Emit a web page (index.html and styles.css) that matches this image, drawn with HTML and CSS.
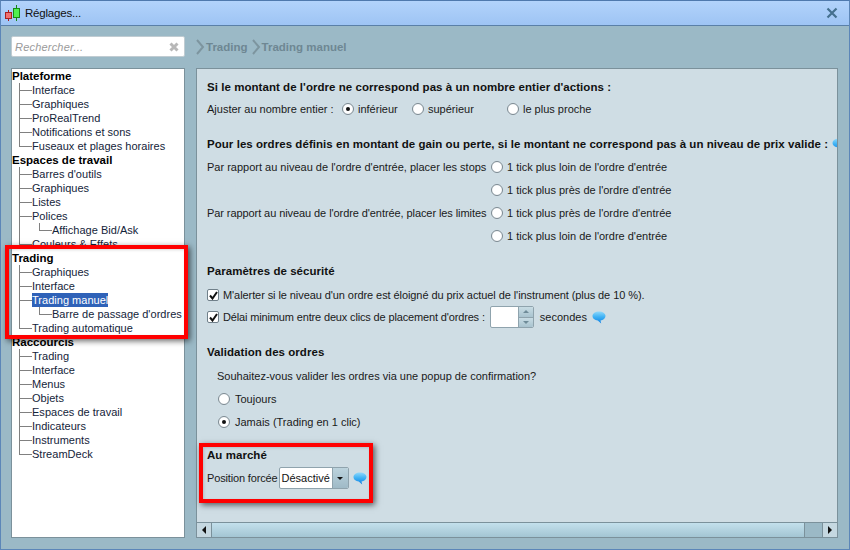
FILE: index.html
```html
<!DOCTYPE html>
<html lang="fr">
<head>
    <meta charset="UTF-8">
    <title>Réglages...</title>
    <link rel="stylesheet" href="styles.css">
</head>
<body>
    <div class="window">
        <div class="titlebar">
            <svg class="app-icon" width="17" height="17" viewBox="0 0 17 17">
                <path d="M4.500 5v11" stroke="#b01818"/>
                <rect x="1.500" y="7.500" width="6" height="6" fill="#f07070" stroke="#a82020"/>
                <path d="M12.500 0v16" stroke="#168a16"/>
                <rect x="9.500" y="3.500" width="6" height="9" fill="#50f050" stroke="#188a18"/>
            </svg>
            <span class="title-text">Réglages...</span>
            <svg class="close-icon" width="12" height="12" viewBox="0 0 12 12">
                <path d="M1.500 1.500l9 9M10.500 1.500l-9 9" stroke="#45708f" stroke-width="2.200"/>
            </svg>
        </div>

        <div class="content">
            <div class="side">
                <div class="search">
                    <span class="search-hint">Rechercher...</span>
                    <svg width="10" height="10" viewBox="0 0 10 10">
                        <path d="M1.500 1.500l7 7M8.500 1.500l-7 7" stroke="#b8b8b8" stroke-width="3"/>
                    </svg>
                </div>
                <div class="tree">
                    <div class="tree-title">Plateforme</div>
                    <ul>
                        <li>Interface</li>
                        <li>Graphiques</li>
                        <li>ProRealTrend</li>
                        <li>Notifications et sons</li>
                        <li>Fuseaux et plages horaires</li>
                    </ul>
                    <div class="tree-title">Espaces de travail</div>
                    <ul>
                        <li>Barres d'outils</li>
                        <li>Graphiques</li>
                        <li>Listes</li>
                        <li>Polices
                            <ul>
                                <li>Affichage Bid/Ask</li>
                            </ul>
                        </li>
                        <li>Couleurs &amp; Effets</li>
                    </ul>
                    <div class="tree-title">Trading</div>
                    <ul>
                        <li>Graphiques</li>
                        <li>Interface</li>
                        <li><span class="selected">Trading manuel</span>
                            <ul>
                                <li>Barre de passage d'ordres</li>
                            </ul>
                        </li>
                        <li>Trading automatique</li>
                    </ul>
                    <div class="tree-title">Raccourcis</div>
                    <ul>
                        <li>Trading</li>
                        <li>Interface</li>
                        <li>Menus</li>
                        <li>Objets</li>
                        <li>Espaces de travail</li>
                        <li>Indicateurs</li>
                        <li>Instruments</li>
                        <li>StreamDeck</li>
                    </ul>
                </div>
            </div>

            <div class="main">
                <div class="crumbs">
                    <svg width="9" height="16" viewBox="0 0 9 16"><path d="M1 1l6 7-6 7" fill="none" stroke="#7d959f" stroke-width="2"/></svg>
                    <span class="crumb">Trading</span>
                    <svg width="9" height="16" viewBox="0 0 9 16"><path d="M1 1l6 7-6 7" fill="none" stroke="#7d959f" stroke-width="2"/></svg>
                    <span>Trading manuel</span>
                </div>
                <div class="panel">
                    <div class="panel-body">
                        <h2 class="first">Si le montant de l'ordre ne correspond pas à un nombre entier d'actions :</h2>
                        <div class="row adjust">
                            <span class="adjust-label">Ajuster au nombre entier :</span>
                            <span class="radio on"></span><span class="adjust-a">inférieur</span>
                            <span class="radio"></span><span class="adjust-b">supérieur</span>
                            <span class="radio"></span><span>le plus proche</span>
                        </div>

                        <h2 class="prices">Pour les ordres définis en montant de gain ou perte, si le montant ne correspond pas à un niveau de prix valide :
                            <svg class="bubble" width="14" height="13" viewBox="0 0 14 13"><path d="M7 .5c3.600 0 6.500 1.900 6.500 4.500 0 2.300-2.200 4.100-5 4.400l.7 3.100-3.500-3.100C2.800 9.300.5 7.400.5 5 .5 2.400 3.400.5 7 .5z" fill="url(#bubble-fill)"/></svg>
                        </h2>
                        <div class="tick-grid">
                            <span>Par rapport au niveau de l'ordre d'entrée, placer les stops</span>
                            <span class="radio"></span><span>1 tick plus loin de l'ordre d'entrée</span>
                            <span></span>
                            <span class="radio"></span><span>1 tick plus près de l'ordre d'entrée</span>
                            <span class="tight">Par rapport au niveau de l'ordre d'entrée, placer les limites</span>
                            <span class="radio"></span><span>1 tick plus près de l'ordre d'entrée</span>
                            <span></span>
                            <span class="radio"></span><span>1 tick plus loin de l'ordre d'entrée</span>
                        </div>

                        <h2 class="security">Paramètres de sécurité</h2>
                        <div class="row check-row">
                            <span class="check">
                                <svg width="9" height="9" viewBox="0 0 9 9"><path d="M1 4.500l2.500 3L8 1" fill="none" stroke="#111" stroke-width="2"/></svg>
                            </span>
                            <span class="tight">M'alerter si le niveau d'un ordre est éloigné du prix actuel de l'instrument (plus de 10 %).</span>
                        </div>
                        <div class="row check-row delay">
                            <span class="check">
                                <svg width="9" height="9" viewBox="0 0 9 9"><path d="M1 4.500l2.500 3L8 1" fill="none" stroke="#111" stroke-width="2"/></svg>
                            </span>
                            <span class="tighter">Délai minimum entre deux clics de placement d'ordres :</span>
                            <span class="spinner">
                                <span class="spinner-input"></span>
                                <span class="spinner-btns">
                                    <span class="spin-up"></span>
                                    <span class="spin-down"></span>
                                </span>
                            </span>
                            <span>secondes</span>
                            <svg class="bubble" width="14" height="13" viewBox="0 0 14 13"><path d="M7 .5c3.600 0 6.500 1.900 6.500 4.500 0 2.300-2.200 4.100-5 4.400l.7 3.100-3.500-3.100C2.800 9.300.5 7.400.5 5 .5 2.400 3.400.5 7 .5z" fill="url(#bubble-fill)"/></svg>
                        </div>

                        <h2 class="validation">Validation des ordres</h2>
                        <div class="indent question">Souhaitez-vous valider les ordres via une popup de confirmation?</div>
                        <div class="row indent-radio">
                            <span class="radio"></span><span>Toujours</span>
                        </div>
                        <div class="row indent-radio">
                            <span class="radio on"></span><span>Jamais (Trading en 1 clic)</span>
                        </div>

                        <h2 class="market">Au marché</h2>
                        <div class="row market-row">
                            <span class="tighter">Position forcée</span>
                            <span class="select">
                                <span class="select-value">Désactivé</span>
                                <span class="select-btn"></span>
                            </span>
                            <svg class="bubble" width="14" height="13" viewBox="0 0 14 13"><path d="M7 .5c3.600 0 6.500 1.900 6.500 4.500 0 2.300-2.200 4.100-5 4.400l.7 3.100-3.500-3.100C2.800 9.300.5 7.400.5 5 .5 2.400 3.400.5 7 .5z" fill="url(#bubble-fill)"/></svg>
                        </div>
                    </div>
                    <div class="hscroll">
                        <span class="scroll-btn"><span class="arrow-left"></span></span>
                        <span class="scroll-thumb"></span>
                        <span class="scroll-track"></span>
                        <span class="scroll-btn"><span class="arrow-right"></span></span>
                    </div>
                </div>
            </div>
        </div>

        <div class="callout callout-tree"></div>
        <div class="callout callout-market"></div>
    </div>

    <svg width="0" height="0" class="defs">
        <defs>
            <linearGradient id="bubble-fill" x1="0" y1="0" x2="0" y2="1">
                <stop offset="0" stop-color="#8fd8fb"/>
                <stop offset="0.45" stop-color="#3fb2f4"/>
                <stop offset="1" stop-color="#0f7fe4"/>
            </linearGradient>
        </defs>
    </svg>
</body>
</html>
```

FILE: styles.css
```css
* {
    box-sizing: border-box;
}

html, body {
    margin: 0;
    height: 100%;
}

body {
    font-family: "Liberation Sans", Arial, sans-serif;
    font-size: 11px;
    color: #1a1a1a;
    overflow: hidden;
}

.defs {
    position: absolute;
}

.tight {
    letter-spacing: -0.08px;
}

.tighter {
    letter-spacing: -0.15px;
}

.window {
    position: relative;
    width: 850px;
    height: 550px;
    display: flex;
    flex-direction: column;
    background: #9bb9c6;
    border: 1px solid #5c86b8;
    border-top-color: #4f79ad;
}

.titlebar {
    height: 25px;
    flex: none;
    display: flex;
    align-items: center;
    padding: 0 11px 0 3px;
    background: linear-gradient(#b2d3fb, #9ec4f4);
    border-bottom: 1px solid #5a80a8;
}

.app-icon {
    margin-right: 4px;
}

.title-text {
    font-size: 11.500px;
    letter-spacing: -0.2px;
    flex: 1;
    color: #111;
}

.content {
    flex: 1;
    min-height: 0;
    display: flex;
    padding: 10px 11px 11px 10px;
    gap: 11px;
}

/* left column */
.side {
    width: 174px;
    flex: none;
    display: flex;
    flex-direction: column;
    gap: 11px;
}

.search {
    height: 21px;
    flex: none;
    display: flex;
    align-items: center;
    justify-content: space-between;
    padding: 0 5px 0 3px;
    background: #fff;
    border: 1px solid #c0ccd2;
    border-radius: 2px;
}

.search-hint {
    font-style: italic;
    color: #9a9a9a;
    letter-spacing: 0.2px;
}

.tree {
    flex: 1;
    min-height: 0;
    background: #fff;
    border: 1px solid #7b919b;
    overflow: hidden;
    line-height: 14px;
}

.tree-title {
    height: 14px;
    font-weight: bold;
    color: #000;
    font-size: 11.500px;
}

.tree ul {
    list-style: none;
    margin: 0;
    padding: 0 0 0 20px;
    color: #14243a;
}

.tree li {
    position: relative;
    min-height: 14px;
    white-space: nowrap;
    letter-spacing: 0.02px;
}

/* connector lines */
.tree li::before {
    content: "";
    position: absolute;
    left: -13px;
    top: 0;
    width: 12px;
    height: 7px;
    border-left: 1px solid #808080;
    border-bottom: 1px solid #808080;
}

.tree li:not(:last-child)::after {
    content: "";
    position: absolute;
    left: -13px;
    top: 0;
    bottom: 0;
    border-left: 1px solid #808080;
}

.selected {
    background: #2f62b8;
    color: #fff;
    display: inline-block;
    height: 14px;
}

/* right column */
.main {
    flex: 1;
    min-width: 0;
    display: flex;
    flex-direction: column;
    gap: 11px;
}

.crumbs {
    height: 21px;
    flex: none;
    display: flex;
    align-items: center;
    gap: 1px;
    font-size: 11.500px;
    font-weight: bold;
    color: #6e8793;
}

.crumb {
    margin-right: 3px;
}

.panel {
    flex: 1;
    min-height: 0;
    display: flex;
    flex-direction: column;
    background: #cfdde4;
    border: 1px solid #7b919b;
    overflow: hidden;
}

.panel-body {
    flex: 1;
    min-height: 0;
    padding: 11px 0 0 10px;
    white-space: nowrap;
    overflow: hidden;
}

h2 {
    margin: 0;
    font-size: 11.500px;
    line-height: 14px;
    font-weight: bold;
    letter-spacing: 0.05px;
    color: #111;
    display: flex;
    align-items: center;
    gap: 4px;
}

.row {
    display: flex;
    align-items: center;
    height: 14px;
}

.radio {
    display: inline-block;
    width: 12px;
    height: 12px;
    flex: none;
    border-radius: 50%;
    background: radial-gradient(#fff 55%, #e2e8ec);
    border: 1px solid #7d8a92;
    position: relative;
}

.radio.on::after {
    content: "";
    position: absolute;
    left: 3px;
    top: 3px;
    width: 4px;
    height: 4px;
    border-radius: 50%;
    background: #111;
}

.adjust {
    margin-top: 8px;
}

.adjust-label {
    width: 135px;
}

.adjust .radio {
    margin-right: 4px;
}

.adjust-a {
    width: 54px;
}

.adjust-b {
    width: 79px;
}

.prices {
    margin-top: 21px;
    width: 700px;
}

.prices .bubble {
    margin-left: 0;
}

.tick-grid {
    margin-top: 9px;
    display: grid;
    grid-template-columns: 284px 16px auto;
    grid-auto-rows: 14px;
    row-gap: 9px;
    align-items: center;
}

.security {
    margin-top: 21px;
}

.check {
    width: 12px;
    height: 12px;
    flex: none;
    margin-right: 4px;
    display: inline-flex;
    align-items: center;
    justify-content: center;
    background: #fff;
    border: 1px solid #70808a;
    border-radius: 2px;
}

.check-row {
    margin-top: 10px;
}

.check-row.delay {
    margin-top: 8px;
}

.spinner {
    display: inline-flex;
    width: 44px;
    height: 22px;
    margin: 0 6px 0 5px;
    flex: none;
    background: #fff;
    border: 1px solid #8fa3ad;
    border-radius: 2px;
    overflow: hidden;
}

.spinner-input {
    flex: 1;
}

.spinner-btns {
    width: 15px;
    display: flex;
    flex-direction: column;
    border-left: 1px solid #8fa3ad;
}

.spin-up, .spin-down {
    flex: 1;
    display: flex;
    align-items: center;
    justify-content: center;
    background: linear-gradient(#c8dce4, #a9c3cf);
}

.spin-up {
    border-bottom: 1px solid #8fa3ad;
}

.spin-up::after {
    content: "";
    border: 3px solid transparent;
    border-top: 0;
    border-bottom: 3px solid #6f8b98;
}

.spin-down::after {
    content: "";
    border: 3px solid transparent;
    border-bottom: 0;
    border-top: 3px solid #6f8b98;
}

.bubble {
    margin-left: 5px;
    flex: none;
}

.validation {
    margin-top: 21px;
}

.question {
    margin-top: 10px;
    padding-left: 10px;
    line-height: 14px;
}

.indent-radio {
    margin-top: 9px;
    padding-left: 11px;
}

.indent-radio .radio {
    margin-right: 5px;
}

.market {
    margin-top: 19px;
}

.market-row {
    margin-top: 9px;
}

.market-row .bubble {
    margin-left: 4px;
}

.select {
    display: inline-flex;
    width: 70px;
    height: 22px;
    flex: none;
    background: #fff;
    border: 1px solid #8fa3ad;
    border-radius: 2px;
    margin-left: 1px;
    overflow: hidden;
}

.select-value {
    flex: 1;
    line-height: 20px;
    padding-left: 2px;
    color: #111;
}

.select-btn {
    width: 16px;
    display: flex;
    align-items: center;
    justify-content: center;
    background: linear-gradient(#bcd3dd, #9fbac7);
    border-left: 1px solid #8fa3ad;
}

.select-btn::after {
    content: "";
    border: 3.500px solid transparent;
    border-bottom: 0;
    border-top: 3.500px solid #111;
}

/* horizontal scrollbar */
.hscroll {
    height: 15px;
    flex: none;
    display: flex;
    border-top: 1px solid #7b919b;
}

.scroll-btn {
    width: 15px;
    flex: none;
    display: flex;
    align-items: center;
    justify-content: center;
    background: #c5d8e1;
}

.scroll-btn:first-child {
    border-right: 1px solid #7b919b;
}

.scroll-btn:last-child {
    border-left: 1px solid #7b919b;
}

.arrow-left {
    border: 4px solid transparent;
    border-left: 0;
    border-right: 4px solid #111;
}

.arrow-right {
    border: 4px solid transparent;
    border-right: 0;
    border-left: 4px solid #111;
}

.scroll-thumb {
    flex: 1;
    background: linear-gradient(#c3e0ec, #a3c5d3);
    border-right: 1px solid #7b919b;
}

.scroll-track {
    width: 17px;
    flex: none;
    background: #9bb9c6;
}

/* red annotation frames */
.callout {
    position: absolute;
    border: 4px solid #ff0000;
    box-shadow: 2px 2px 6px rgba(0, 0, 0, 0.6), inset 1px 1px 3px rgba(0, 0, 0, 0.15);
}

.callout-tree {
    left: 4px;
    top: 244px;
    width: 183px;
    height: 94px;
}

.callout-market {
    left: 198px;
    top: 442px;
    width: 174px;
    height: 60px;
}
```
